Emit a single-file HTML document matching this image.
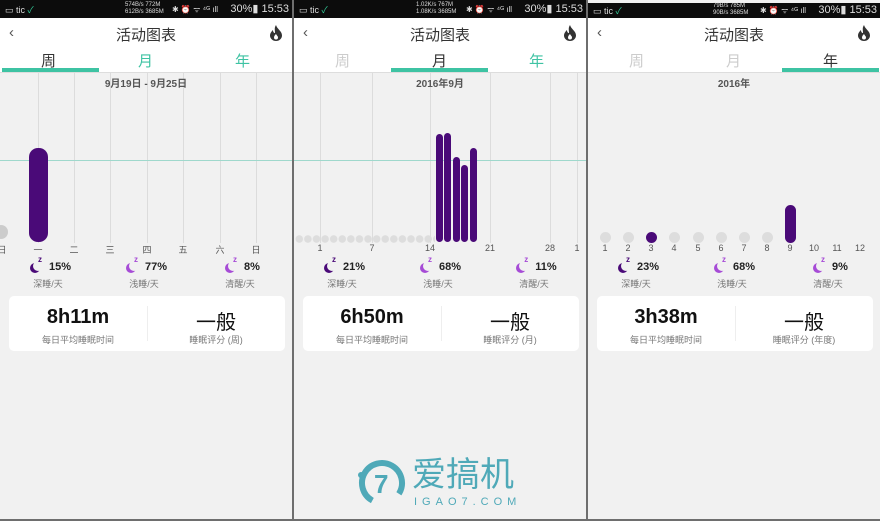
<!DOCTYPE html><html><head><meta charset="utf-8"><style>
*{margin:0;padding:0;box-sizing:border-box}
body{width:880px;height:521px;background:#6e6e6e;position:relative;overflow:hidden;font-family:"Liberation Sans","Noto Sans CJK SC",sans-serif}
.p{position:absolute;top:0;width:292px;height:519px;background:#f1f1f1;overflow:hidden}
.a{position:absolute}
.sb{left:0;top:0;width:100%;height:18px;background:#0c0c0c;color:#ddd;white-space:nowrap}
.hd{left:0;top:18px;width:100%;height:55px;background:#fff;border-bottom:1px solid #ddd}
.t{font-size:15px;color:#333;width:100%;text-align:center;top:24px}
.tab{font-size:15px;width:97px;text-align:center;top:50px}
.ul{top:68px;height:4px;width:97px;background:#3ec3a3}
.gl{top:73px;width:1px;height:170px;background:#dcdcdc}
.hl{left:0;top:160px;width:100%;height:1px;background:#9fd8cc}
.ax{top:243px;font-size:9px;color:#555;width:20px;margin-left:-10px;text-align:center}
.bar{background:#4a0a78;border-radius:5px}
.dot{width:8px;height:8px;border-radius:50%;background:#ddd}
.st{top:261px;font-size:11px;font-weight:bold;color:#222;width:80px;text-align:center;margin-left:-40px}
.sl{top:277px;font-size:9px;color:#777;width:80px;text-align:center;margin-left:-40px}
.card{left:9px;top:296px;width:276px;height:55px;background:#fff;border-radius:5px}
.big{font-size:20px;font-weight:bold;color:#111;width:138px;text-align:center;top:10px}
.cap{font-size:9px;color:#777;width:138px;text-align:center;top:37px}
.moon{display:inline-block;position:relative;width:10px;height:10px;border-radius:50%;box-shadow:-3px 2px 0 0 #4a0a78;margin-right:6px;vertical-align:-1px;color:#4a0a78}
.moon.l{box-shadow:-3px 2px 0 0 #a64bd6;color:#a64bd6}
.moon:after{content:"z";position:absolute;left:5px;top:-6px;font-size:8px;font-weight:bold}
.sbt{position:absolute;right:3px;top:2px;font-size:11px}
</style></head><body>

<!-- panel 1 -->
<div class="p" style="left:0">
<div class="a sb"><span class="a" style="left:5px;top:3px;font-size:9px">▭ tic <span style="color:#3c9">✓</span></span><span class="a" style="left:125px;top:2px;font-size:6px;line-height:7px">574B/s 772M<br>612B/s 3685M</span><span class="a" style="left:172px;top:4px;font-size:8px">✱ ⏰ ᯤ ⁴ᴳ ıll</span><span class="sbt">30%▮ 15:53</span></div>
<div class="a hd"></div>
<div class="a" style="left:9px;top:24px;font-size:15px;color:#555">‹</div>
<div class="a t">活动图表</div>
<svg class="a" style="left:269px;top:25px" width="14" height="16" viewBox="0 0 14 16"><path d="M7 0C8 4 13 6 13 10.5A6 5.5 0 0 1 1 10.5C1 8 3 6 4 5C4 7 5 8 6 8C6 5 5 3 7 0Z" fill="#333"/><path d="M7 9C8 11 9 11 9 12.5A2 2 0 0 1 5 12.5C5 11 6 10 7 9Z" fill="#fff"/></svg>
<div class="a tab" style="left:0;color:#333">周</div><div class="a tab" style="left:97px;color:#3ec3a3">月</div><div class="a tab" style="left:194px;color:#3ec3a3">年</div>
<div class="a ul" style="left:2px"></div>
<div class="a gl" style="left:38px"></div><div class="a gl" style="left:74px"></div><div class="a gl" style="left:110px"></div><div class="a gl" style="left:147px"></div><div class="a gl" style="left:183px"></div><div class="a gl" style="left:220px"></div><div class="a gl" style="left:256px"></div>
<div class="a" style="top:75px;width:100%;text-align:center;font-size:10px;font-weight:bold;color:#555">9月19日 - 9月25日</div>
<div class="a hl"></div>
<div class="a bar" style="left:29px;top:148px;width:19px;height:94px;border-radius:9px"></div>
<div class="a" style="left:-6px;top:225px;width:14px;height:14px;border-radius:50%;background:#ccc"></div>
<div class="a ax" style="left:2px">日</div><div class="a ax" style="left:38px">一</div><div class="a ax" style="left:74px">二</div><div class="a ax" style="left:110px">三</div><div class="a ax" style="left:147px">四</div><div class="a ax" style="left:183px">五</div><div class="a ax" style="left:220px">六</div><div class="a ax" style="left:256px">日</div>
<div class="a st" style="left:52px"><span class="moon"></span>15%</div><div class="a sl" style="left:48px">深睡/天</div>
<div class="a st" style="left:148px"><span class="moon l"></span>77%</div><div class="a sl" style="left:144px">浅睡/天</div>
<div class="a st" style="left:244px"><span class="moon l"></span>8%</div><div class="a sl" style="left:240px">清醒/天</div>
<div class="a card"><div class="a big" style="left:0">8h11m</div><div class="a cap" style="left:0">每日平均睡眠时间</div><div class="a" style="left:138px;top:10px;width:1px;height:35px;background:#eee"></div><div class="a big" style="left:138px;font-weight:normal">一般</div><div class="a cap" style="left:138px">睡眠评分 (周)</div></div>
</div>

<!-- panel 2 -->
<div class="p" style="left:294px">
<div class="a sb"><span class="a" style="left:5px;top:3px;font-size:9px">▭ tic <span style="color:#3c9">✓</span></span><span class="a" style="left:122px;top:2px;font-size:6px;line-height:7px">1.02K/s 767M<br>1.08K/s 3685M</span><span class="a" style="left:172px;top:4px;font-size:8px">✱ ⏰ ᯤ ⁴ᴳ ıll</span><span class="sbt">30%▮ 15:53</span></div>
<div class="a hd"></div>
<div class="a" style="left:9px;top:24px;font-size:15px;color:#555">‹</div>
<div class="a t">活动图表</div>
<svg class="a" style="left:269px;top:25px" width="14" height="16" viewBox="0 0 14 16"><path d="M7 0C8 4 13 6 13 10.5A6 5.5 0 0 1 1 10.5C1 8 3 6 4 5C4 7 5 8 6 8C6 5 5 3 7 0Z" fill="#333"/><path d="M7 9C8 11 9 11 9 12.5A2 2 0 0 1 5 12.5C5 11 6 10 7 9Z" fill="#fff"/></svg>
<div class="a tab" style="left:0;color:#ccc">周</div><div class="a tab" style="left:97px;color:#333">月</div><div class="a tab" style="left:194px;color:#3ec3a3">年</div>
<div class="a ul" style="left:97px"></div>
<div class="a gl" style="left:26px"></div><div class="a gl" style="left:78px"></div><div class="a gl" style="left:136px"></div><div class="a gl" style="left:196px"></div><div class="a gl" style="left:256px"></div><div class="a gl" style="left:283px"></div>
<div class="a" style="top:75px;width:100%;text-align:center;font-size:10px;font-weight:bold;color:#555">2016年9月</div>
<div class="a hl"></div>
<div class="a" style="left:1px;top:235px;width:140px;height:8px;background:radial-gradient(circle,#ddd 3.5px,transparent 4px) 0 0/8.6px 8px repeat-x"></div>
<div class="a bar" style="left:142px;top:134px;width:7px;height:108px;border-radius:4px"></div>
<div class="a bar" style="left:150px;top:133px;width:7px;height:109px;border-radius:4px"></div>
<div class="a bar" style="left:159px;top:157px;width:7px;height:85px;border-radius:4px"></div>
<div class="a bar" style="left:167px;top:165px;width:7px;height:77px;border-radius:4px"></div>
<div class="a bar" style="left:176px;top:148px;width:7px;height:94px;border-radius:4px"></div>
<div class="a ax" style="left:26px">1</div><div class="a ax" style="left:78px">7</div><div class="a ax" style="left:136px">14</div><div class="a ax" style="left:196px">21</div><div class="a ax" style="left:256px">28</div><div class="a ax" style="left:283px">1</div>
<div class="a st" style="left:52px"><span class="moon"></span>21%</div><div class="a sl" style="left:48px">深睡/天</div>
<div class="a st" style="left:148px"><span class="moon l"></span>68%</div><div class="a sl" style="left:144px">浅睡/天</div>
<div class="a st" style="left:244px"><span class="moon l"></span>11%</div><div class="a sl" style="left:240px">清醒/天</div>
<div class="a card"><div class="a big" style="left:0">6h50m</div><div class="a cap" style="left:0">每日平均睡眠时间</div><div class="a" style="left:138px;top:10px;width:1px;height:35px;background:#eee"></div><div class="a big" style="left:138px;font-weight:normal">一般</div><div class="a cap" style="left:138px">睡眠评分 (月)</div></div>
</div>

<!-- panel 3 -->
<div class="p" style="left:588px">
<div class="a sb" style="top:3px;height:15px"><span class="a" style="left:5px;top:1px;font-size:9px">▭ tic <span style="color:#3c9">✓</span></span><span class="a" style="left:125px;top:0px;font-size:6px;line-height:7px">79B/s 785M<br>90B/s 3685M</span><span class="a" style="left:172px;top:2px;font-size:8px">✱ ⏰ ᯤ ⁴ᴳ ıll</span><span class="sbt" style="top:0">30%▮ 15:53</span></div>
<div class="a hd"></div>
<div class="a" style="left:9px;top:24px;font-size:15px;color:#555">‹</div>
<div class="a t">活动图表</div>
<svg class="a" style="left:269px;top:25px" width="14" height="16" viewBox="0 0 14 16"><path d="M7 0C8 4 13 6 13 10.5A6 5.5 0 0 1 1 10.5C1 8 3 6 4 5C4 7 5 8 6 8C6 5 5 3 7 0Z" fill="#333"/><path d="M7 9C8 11 9 11 9 12.5A2 2 0 0 1 5 12.5C5 11 6 10 7 9Z" fill="#fff"/></svg>
<div class="a tab" style="left:0;color:#ccc">周</div><div class="a tab" style="left:97px;color:#ccc">月</div><div class="a tab" style="left:194px;color:#333">年</div>
<div class="a ul" style="left:194px"></div>
<div class="a" style="top:75px;width:100%;text-align:center;font-size:10px;font-weight:bold;color:#555">2016年</div>
<div class="a dot" style="left:12px;top:232px;width:11px;height:11px"></div>
<div class="a dot" style="left:35px;top:232px;width:11px;height:11px"></div>
<div class="a dot" style="left:58px;top:232px;width:11px;height:11px;background:#4a0a78"></div>
<div class="a dot" style="left:81px;top:232px;width:11px;height:11px"></div>
<div class="a dot" style="left:105px;top:232px;width:11px;height:11px"></div>
<div class="a dot" style="left:128px;top:232px;width:11px;height:11px"></div>
<div class="a dot" style="left:151px;top:232px;width:11px;height:11px"></div>
<div class="a dot" style="left:174px;top:232px;width:11px;height:11px"></div>
<div class="a bar" style="left:197px;top:205px;width:11px;height:38px;border-radius:6px"></div>
<div class="a ax" style="left:17px">1</div><div class="a ax" style="left:40px">2</div><div class="a ax" style="left:63px">3</div><div class="a ax" style="left:86px">4</div><div class="a ax" style="left:110px">5</div><div class="a ax" style="left:133px">6</div><div class="a ax" style="left:156px">7</div><div class="a ax" style="left:179px">8</div><div class="a ax" style="left:202px">9</div><div class="a ax" style="left:226px">10</div><div class="a ax" style="left:249px">11</div><div class="a ax" style="left:272px">12</div>
<div class="a st" style="left:52px"><span class="moon"></span>23%</div><div class="a sl" style="left:48px">深睡/天</div>
<div class="a st" style="left:148px"><span class="moon l"></span>68%</div><div class="a sl" style="left:144px">浅睡/天</div>
<div class="a st" style="left:244px"><span class="moon l"></span>9%</div><div class="a sl" style="left:240px">清醒/天</div>
<div class="a card"><div class="a big" style="left:0">3h38m</div><div class="a cap" style="left:0">每日平均睡眠时间</div><div class="a" style="left:138px;top:10px;width:1px;height:35px;background:#eee"></div><div class="a big" style="left:138px;font-weight:normal">一般</div><div class="a cap" style="left:138px">睡眠评分 (年度)</div></div>
</div>

<!-- logo -->
<svg class="a" style="left:352px;top:458px" width="60" height="50" viewBox="0 0 60 50"><circle cx="30" cy="25" r="20" fill="none" stroke="#4fa9b8" stroke-width="6" stroke-dasharray="95 30" transform="rotate(120 30 25)"/><circle cx="9" cy="17" r="3" fill="#4fa9b8"/><text x="22" y="35" font-family="Liberation Sans" font-weight="bold" font-size="26" fill="#4fa9b8">7</text></svg>
<div class="a" style="left:412px;top:456px;font-size:34px;line-height:38px;color:#4fa9b8;font-family:'Liberation Sans','Noto Sans CJK SC',sans-serif">爱搞机</div>
<div class="a" style="left:414px;top:496px;font-size:11px;letter-spacing:5px;color:#4fa9b8">IGAO7.COM</div>
</body></html>
